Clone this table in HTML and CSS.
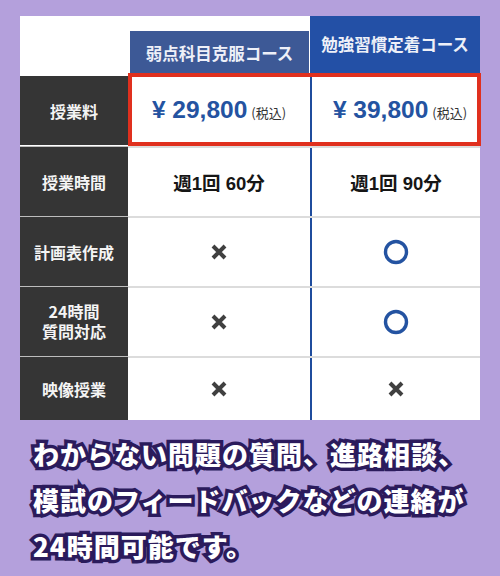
FILE: index.html
```html
<!DOCTYPE html>
<html lang="ja">
<head>
<meta charset="utf-8">
<link rel="stylesheet" href="styles.css">
</head>
<body>
<div class="page">
  <div class="table">
    <div class="row head">
      <div class="blank"></div>
      <div class="h h2"><span>弱点科目克服コース</span></div>
      <div class="h h3"><span>勉強習慣定着コース</span></div>
    </div>
    <div class="row price">
      <div class="label">授業料</div>
      <div class="cell"><span class="yen">¥ 29,800</span><span class="tax">(税込)</span></div>
      <div class="cell c3"><span class="yen">¥ 39,800</span><span class="tax">(税込)</span></div>
    </div>
    <div class="row body">
      <div class="label">授業時間</div>
      <div class="cell"><span class="txt">週1回 60分</span></div>
      <div class="cell c3"><span class="txt">週1回 90分</span></div>
    </div>
    <div class="row body">
      <div class="label">計画表作成</div>
      <div class="cell"><svg class="x" viewBox="0 0 16 16"><path d="M2 2L14 14M14 2L2 14"/></svg></div>
      <div class="cell c3"><svg class="o" viewBox="0 0 26 26"><circle cx="13" cy="13" r="10.5"/></svg></div>
    </div>
    <div class="row body">
      <div class="label two"><span class="ln">24時間</span><span class="ln">質問対応</span></div>
      <div class="cell"><svg class="x" viewBox="0 0 16 16"><path d="M2 2L14 14M14 2L2 14"/></svg></div>
      <div class="cell c3"><svg class="o" viewBox="0 0 26 26"><circle cx="13" cy="13" r="10.5"/></svg></div>
    </div>
    <div class="row body last">
      <div class="label">映像授業</div>
      <div class="cell"><svg class="x" viewBox="0 0 16 16"><path d="M2 2L14 14M14 2L2 14"/></svg></div>
      <div class="cell c3"><svg class="x" viewBox="0 0 16 16"><path d="M2 2L14 14M14 2L2 14"/></svg></div>
    </div>
  </div>
  <p class="caption">わからない問題の質問、進路相談、<br>模試のフィードバックなどの連絡が<br>24時間可能です。</p>
</div>
</body>
</html>
```

FILE: styles.css
```css
html, body {
  margin: 0;
  padding: 0;
}
body {
  width: 500px;
  height: 576px;
  overflow: hidden;
  background: #b4a0dc;
  font-family: "Liberation Sans", "Noto Sans CJK JP", sans-serif;
}
.page {
  padding: 16px 20px 0;
}
.table {
  width: 460px;
  background: #fff;
}
.row {
  display: grid;
  grid-template-columns: 108px 182px 170px;
}
.head {
  height: 57px;
}
.blank {
  background: #fff;
}
.h {
  display: flex;
  align-items: center;
  justify-content: center;
  color: #eef0f8;
  font-family: "Noto Sans CJK JP", sans-serif;
  font-weight: 700;
  font-size: 16.5px;
}
.h2 {
  margin: 15px 1px 0 2px;
  background: #3d5996;
  padding-top: 1px;
}
.h3 {
  background: #2350a6;
  padding-bottom: 2px;
}
.label {
  background: #353535;
  color: #f4f4f4;
  font-family: "Noto Sans CJK JP", sans-serif;
  font-weight: 700;
  font-size: 16px;
  display: flex;
  align-items: center;
  justify-content: center;
  text-align: center;
  line-height: 20px;
}
.label.two {
  flex-direction: column;
  gap: 1px;
}
.ln {
  display: block;
  line-height: 19px;
}
.cell {
  display: flex;
  align-items: center;
  justify-content: center;
  background: #fff;
}
.c3 {
  border-left: 2px solid #1f4c9d;
}
.price {
  position: relative;
  height: 73px;
}
.price .label {
  margin-top: 3px;
  margin-bottom: 1px;
}
.price::after {
  content: "";
  position: absolute;
  left: 108px;
  right: -1px;
  top: 0;
  bottom: 0;
  border: 4px solid #e0301e;
}
.yen {
  color: #2453a1;
  font-weight: 700;
  font-size: 24.5px;
}
.tax {
  color: #333;
  font-family: "Noto Sans CJK JP", sans-serif;
  font-size: 13px;
  margin-left: 4px;
  margin-top: 5px;
}
.price .c3 .yen {
  margin-left: 8px;
}
.body {
  height: 70px;
  border-top: 2px solid #dcdcdc;
  box-sizing: border-box;
}
.body .label {
  border-top: 1px solid #bdbdbd;
  margin-top: -2px;
}
.body.last {
  height: 64px;
}
.txt {
  color: #161616;
  font-weight: 700;
  font-size: 18.5px;
}
.x {
  width: 16px;
  height: 16px;
  fill: none;
  stroke: #404040;
  stroke-width: 4;
}
.o {
  width: 26px;
  height: 26px;
  fill: none;
  stroke: #2453a1;
  stroke-width: 3.4;
}
.caption {
  margin: 11px 0 0 13px;
  font-family: "Noto Sans CJK JP", sans-serif;
  font-weight: 900;
  font-size: 26px;
  line-height: 46px;
  color: #fff;
  letter-spacing: 1px;
  -webkit-text-stroke: 7px #2b1b5c;
  paint-order: stroke fill;
}
```
